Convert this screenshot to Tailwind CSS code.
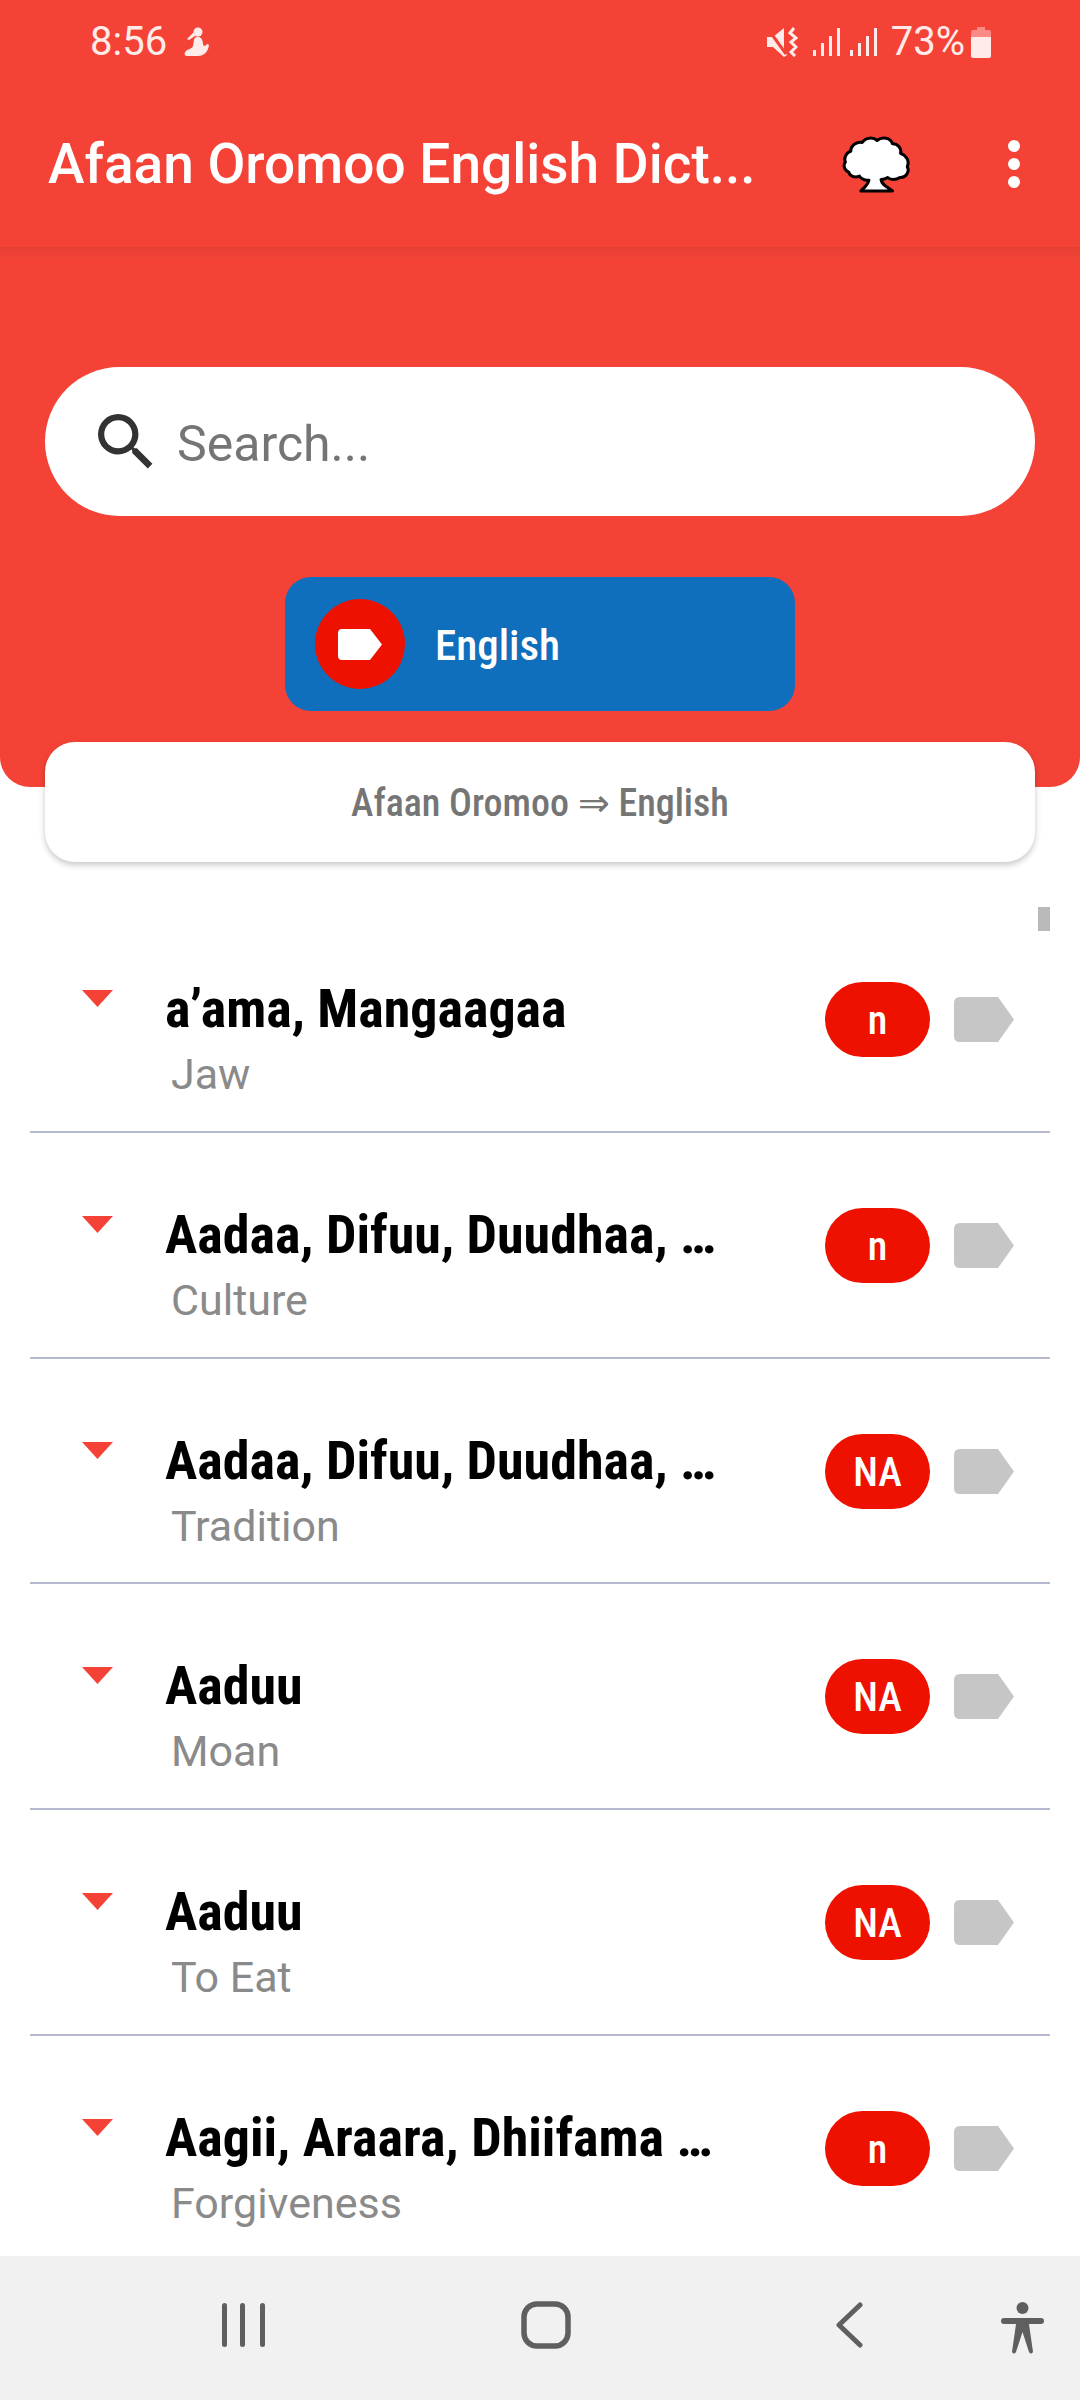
<!DOCTYPE html>
<html lang="en">
<head>
  <meta charset="UTF-8" />
  <meta name="viewport" content="width=device-width, initial-scale=1.0" />
  <title>Afaan Oromoo English Dictionary</title>
  <script src="https://cdn.jsdelivr.net/npm/@tailwindcss/browser@4"></script>
</head>
<body class="w-[1080px] h-[2400px] overflow-hidden flex flex-col bg-white font-['Roboto',sans-serif]">
  <!-- Header -->
  <header class="h-[787px] shrink-0 bg-[#f44336] rounded-b-[30px] flex flex-col">
    <!-- Status bar -->
    <div class="h-[72px] pt-[12px] pl-[90px] flex items-center text-[#ffecea] text-[40px] leading-none">
      <span>8:56</span>
      <svg class="ml-[17px] w-[26px] h-[30px]" viewBox="0 0 26 30" fill="currentColor"><circle cx="14" cy="5" r="4.5"/><path d="M10 5 L3 12 L5 13 L11 9Z"/><path d="M12 10 C16 9 19 12 19 17 C19 19 21 20 23 17 L25 18 C24 25 20 29 14 29 L3 29 C0 29 0 26 2 24 C4 22 8 22 9 19 C10 16 9 12 12 10Z"/></svg>
      <!-- mute -->
      <svg class="ml-auto w-[31px] h-[30px]" viewBox="0 0 31 30" fill="none"><path d="M0 10 H6 L17 1 V23 L20 28 L17 30 L6 20 H0Z" fill="currentColor"/><path d="M1 2 L19 27" stroke="#f44336" stroke-width="3"/><path d="M27 1 L23 6 L29 11 L24 15 L29 20 L24 25 L28 29" stroke="currentColor" stroke-width="3"/></svg>
      <svg class="ml-[15px] w-[27px] h-[28px]" viewBox="0 0 27 28" fill="currentColor"><rect x="0" y="22" width="3" height="6"/><rect x="8" y="15" width="3" height="13"/><rect x="16" y="8" width="3" height="20"/><rect x="24" y="0" width="3" height="28"/></svg>
      <svg class="ml-[10px] w-[27px] h-[28px]" viewBox="0 0 27 28" fill="currentColor"><rect x="0" y="22" width="3" height="6"/><rect x="8" y="15" width="3" height="13"/><rect x="16" y="8" width="3" height="20"/><rect x="24" y="0" width="3" height="28"/></svg>
      <span class="ml-[14px]">73%</span>
      <svg class="ml-[6px] mr-[89px] w-[20px] h-[31px]" viewBox="0 0 20 31"><path d="M6 0 H14 V3 H18 Q20 3 20 5 V10 H0 V5 Q0 3 2 3 H6Z" fill="#fb8b84"/><path d="M0 10 H20 V29 Q20 31 18 31 H2 Q0 31 0 29Z" fill="#ffecea"/></svg>
    </div>
    <!-- Toolbar -->
    <div class="h-[175px] pt-[10px] pl-[48px] flex items-center text-white">
      <h1 class="text-[55px] font-medium leading-none whitespace-nowrap">Afaan Oromoo English Dict...</h1>
      <svg class="ml-auto w-[70px] h-[60px]" viewBox="-4 -4 208 178"><path d="M52 162 C62 152 72 146 76 130 C66 132 52 126 48 118 C34 124 18 118 16 106 C4 102 -2 86 6 76 C0 62 12 46 22 44 C22 26 42 14 56 18 C66 2 90 2 100 12 C116 0 140 4 146 22 C162 22 174 36 170 50 C186 56 198 72 190 90 C198 104 186 124 168 122 C156 130 140 130 132 122 C126 126 118 128 112 128 C114 144 130 150 146 162 Z" fill="#fff" stroke="#000" stroke-width="9" stroke-linejoin="round"/></svg>
      <div class="ml-[96px] mr-[60px] -mt-[2px] flex flex-col gap-[6px]">
        <span class="w-[12px] h-[12px] rounded-full bg-white"></span>
        <span class="w-[12px] h-[12px] rounded-full bg-white"></span>
        <span class="w-[12px] h-[12px] rounded-full bg-white"></span>
      </div>
    </div>
    <div class="h-[13px] bg-gradient-to-b from-[#e53f33] to-[#f44336]"></div>

    <!-- Search -->
    <div class="mt-[107px] mx-[45px] h-[149px] rounded-full bg-white flex items-center pl-[53px] text-[#757575]">
      <svg class="w-[56px] h-[56px] shrink-0 mt-[1px]" viewBox="3 3 18 18" fill="#333"><path d="M15.5 14h-.79l-.28-.27A6.47 6.47 0 0 0 16 9.5 6.5 6.5 0 1 0 9.5 16c1.61 0 3.09-.59 4.23-1.57l.27.28v.79l5 4.99L20.49 19l-4.99-5zm-6 0C7.01 14 5 11.99 5 9.5S7.01 5 9.5 5 14 7.01 14 9.5 11.99 14 9.5 14z"/></svg>
      <span class="ml-[23px] mt-[5px] text-[50px] leading-none">Search...</span>
    </div>

    <!-- Language button -->
    <div class="mt-[61px] ml-[285px] w-[510px] h-[134px] rounded-[26px] bg-[#0f6fbd] flex items-center pl-[30px]">
      <span class="w-[90px] h-[90px] rounded-full bg-[#ee1100] flex items-center justify-center">
        <svg class="w-[44px] h-[31px]" viewBox="0 0 44 31"><path d="M4 0 H32 L44 15.5 L32 31 H4 Q0 31 0 27 V4 Q0 0 4 0Z" fill="#fff"/></svg>
      </span>
      <span class="ml-[30px] mt-[3px] text-white text-[43px] font-medium leading-none [font-stretch:condensed]">English</span>
    </div>
  </header>

  <!-- Direction card -->
  <div class="relative -mt-[45px] mx-[45px] h-[120px] pt-[3px] shrink-0 rounded-[30px] bg-white shadow-[0_3px_6px_rgba(0,0,0,0.22)] flex items-center justify-center text-[#757575] text-[38px] font-medium [font-stretch:condensed]">
    Afaan Oromoo ⇒ English
  </div>

  <!-- Word list -->
  <main class="relative flex-1 min-h-0 overflow-hidden mt-[45px]">
    <span class="absolute right-[30px] top-0 w-[12px] h-[24px] bg-[#b9b9b9]"></span>
    <ul id="word-list"></ul>
  </main>

  <!-- Nav bar -->
  <nav class="h-[144px] pb-[6px] shrink-0 bg-[#f1f1f1] flex items-center text-[#5f5f5f]">
    <svg class="ml-[222px] w-[44px] h-[46px]" viewBox="0 0 44 46" fill="currentColor"><rect x="0" y="1" width="5" height="44" rx="2.5"/><rect x="18" y="1" width="5" height="44" rx="2.5"/><rect x="38" y="1" width="5" height="44" rx="2.5"/></svg>
    <svg class="ml-[255px] w-[50px] h-[48px]" viewBox="0 0 50 48" fill="none" stroke="currentColor" stroke-width="5.5"><rect x="3" y="3" width="44" height="42" rx="13"/></svg>
    <svg class="ml-[264px] w-[28px] h-[46px]" viewBox="0 0 28 46" fill="none" stroke="currentColor" stroke-width="5" stroke-linecap="round" stroke-linejoin="round"><path d="M25 3 L4 23 L25 43"/></svg>
    <svg class="ml-[138px] mt-[6px] w-[43px] h-[52px]" viewBox="0 0 43 52" fill="currentColor"><ellipse cx="21.5" cy="6" rx="6" ry="6"/><path d="M3 16 H40 Q43 16 43 19 Q43 22 40 22 H28 L32 50 Q30 53 28 50 L21.5 30 L15 50 Q13 53 11 50 L15 22 H3 Q0 22 0 19 Q0 16 3 16Z"/></svg>
  </nav>

<script>
// ===== DATA KATA =====
const words = [
  { title: "a’ama, Mangaagaa", meaning: "Jaw", type: "n" },
  { title: "Aadaa, Difuu, Duudhaa, …", meaning: "Culture", type: "n" },
  { title: "Aadaa, Difuu, Duudhaa, …", meaning: "Tradition", type: "NA" },
  { title: "Aaduu", meaning: "Moan", type: "NA" },
  { title: "Aaduu", meaning: "To Eat", type: "NA" },
  { title: "Aagii, Araara, Dhiifama …", meaning: "Forgiveness", type: "n" }
];

const listEl = document.getElementById('word-list');
words.forEach(w=>{
  const li=document.createElement('li');
  li.className="mx-[30px] h-[225.75px] border-b-2 border-[#b4b8d0] flex items-start";
  li.innerHTML=`
    <svg class="ml-[52px] mt-[83px] w-[31px] h-[17px] shrink-0" viewBox="0 0 31 17"><path d="M0 0 H31 L15.5 17Z" fill="#f44336"/></svg>
    <div class="ml-[52px] mt-[72px] min-w-0">
      <div class="text-[54px] leading-[60px] font-bold text-black whitespace-nowrap [font-stretch:condensed]">${w.title}</div>
      <div class="ml-[6px] mt-[10px] text-[43px] leading-[50px] text-[#8a8a8a]">${w.meaning}</div>
    </div>
    <span class="ml-auto mt-[75px] w-[105px] h-[75px] pt-[3px] shrink-0 rounded-full bg-[#ee1100] text-white text-[40px] font-medium flex items-center justify-center [font-stretch:condensed]">${w.type}</span>
    <svg class="ml-[24px] mr-[36px] mt-[90px] w-[60px] h-[45px] shrink-0" viewBox="0 0 60 45"><path d="M6 0 H44 L60 22.5 L44 45 H6 Q0 45 0 39 V6 Q0 0 6 0Z" fill="#c6c6c6"/></svg>`;
  listEl.appendChild(li);
});
</script>
</body>
</html>
